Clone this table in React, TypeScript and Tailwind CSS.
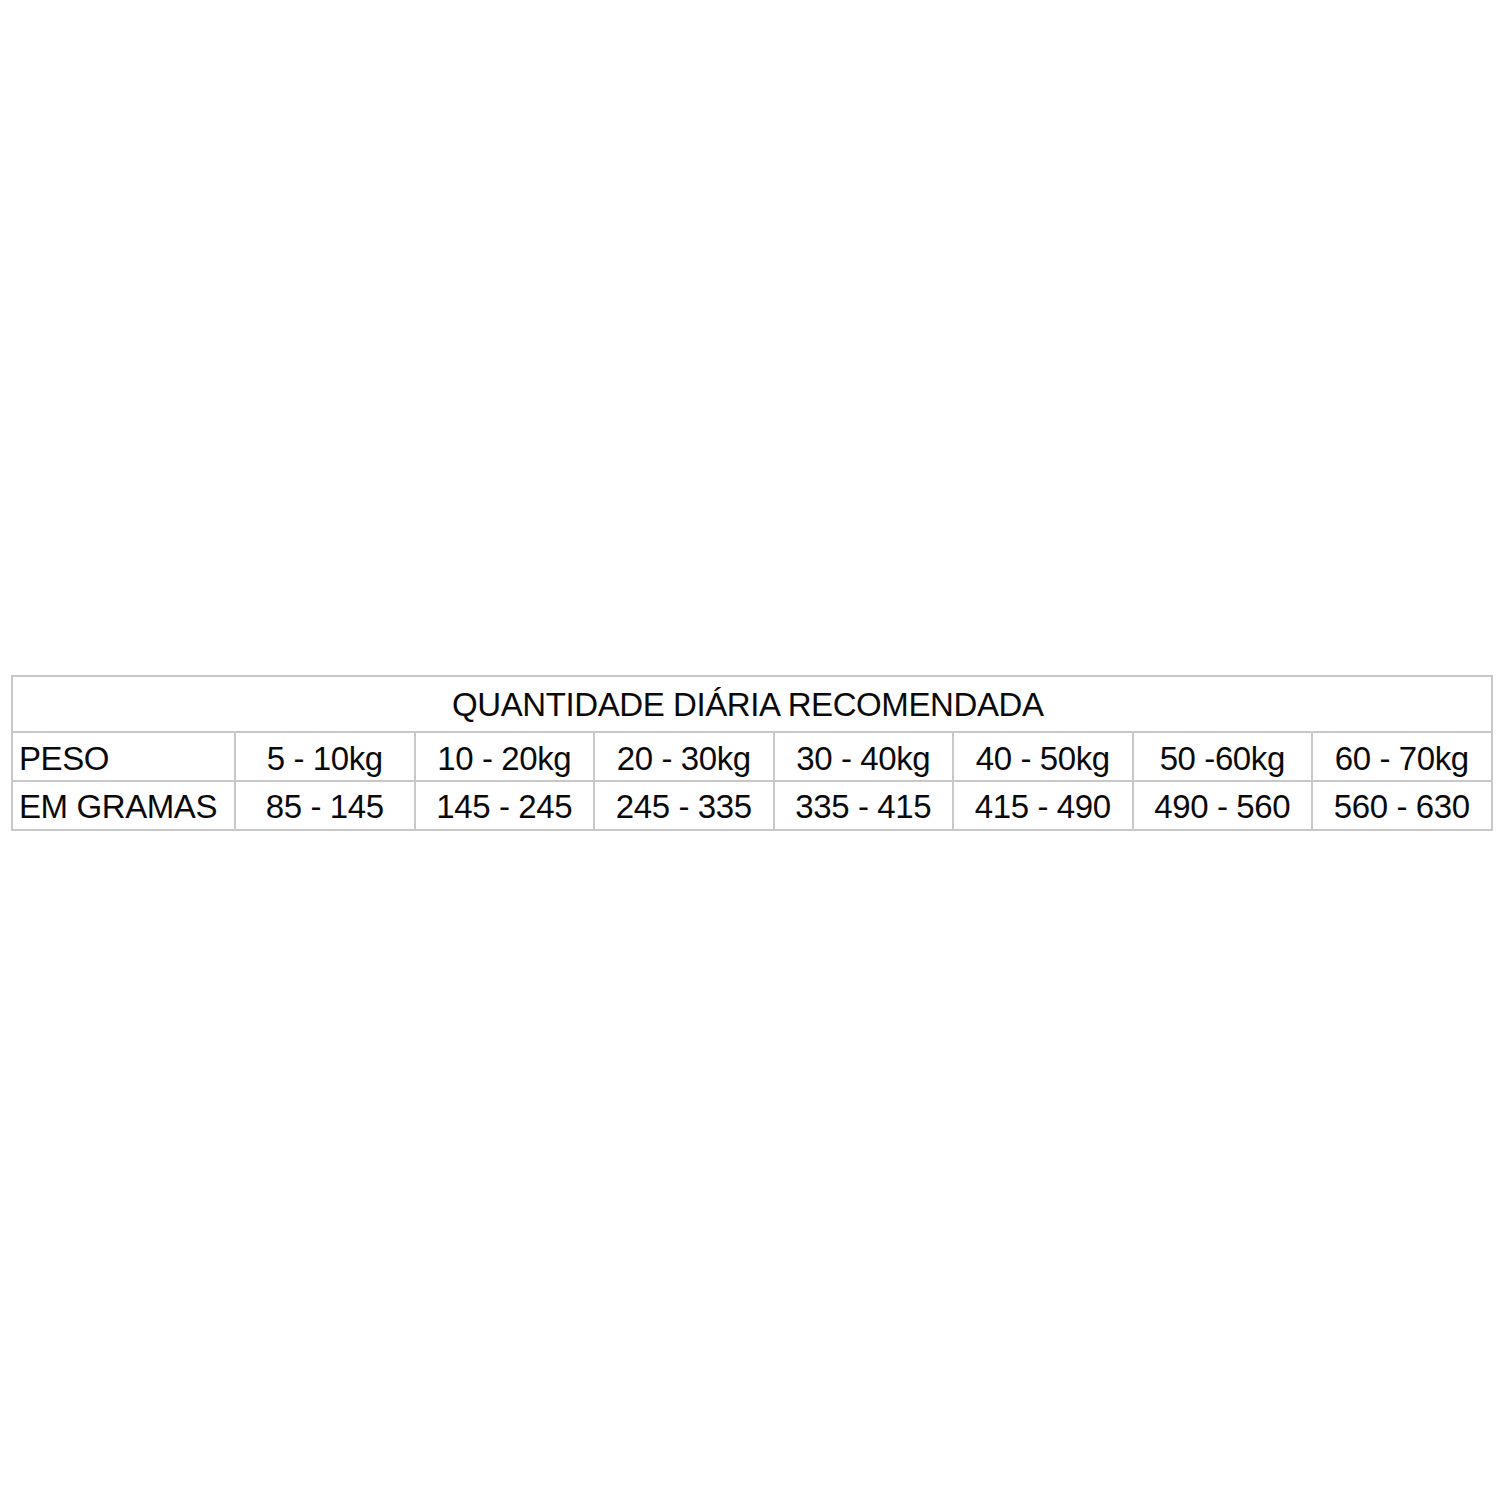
const weights = ['5 - 10kg', '10 - 20kg', '20 - 30kg', '30 - 40kg', '40 - 50kg', '50 -60kg', '60 - 70kg'];
const grams = ['85 - 145', '145 - 245', '245 - 335', '335 - 415', '415 - 490', '490 - 560', '560 - 630'];

export default function App() {
  return (
    <div
      className="w-[1500px] h-[1500px] bg-white pt-[675px] pl-[11px] text-[#0a0a0a]"
      style={{ fontFamily: '"Liberation Sans", Arial, sans-serif' }}
    >
      <table className="table-fixed border-collapse w-[1480px] text-[33px] tracking-[-0.4px] leading-none">
        <colgroup>
          <col className="w-[223px]" />
          {weights.map((w) => (
            <col key={w} className="w-[179.5px]" />
          ))}
        </colgroup>
        <tbody>
          <tr className="h-[56px]">
            <td colSpan={8} className="border-2 border-[#c8c8c8] text-center align-middle pr-[8px]">
              QUANTIDADE DIÁRIA RECOMENDADA
            </td>
          </tr>
          <tr className="h-[49px]">
            <td className="border-2 border-[#c8c8c8] pl-[6px] pt-[4px] align-middle">PESO</td>
            {weights.map((w) => (
              <td key={w} className="border-2 border-[#c8c8c8] text-center pt-[4px] align-middle">
                {w}
              </td>
            ))}
          </tr>
          <tr className="h-[49px]">
            <td className="border-2 border-[#c8c8c8] pl-[6px] pt-[2px] align-middle whitespace-nowrap">EM GRAMAS</td>
            {grams.map((g) => (
              <td key={g} className="border-2 border-[#c8c8c8] text-center pt-[2px] align-middle">
                {g}
              </td>
            ))}
          </tr>
        </tbody>
      </table>
    </div>
  );
}
